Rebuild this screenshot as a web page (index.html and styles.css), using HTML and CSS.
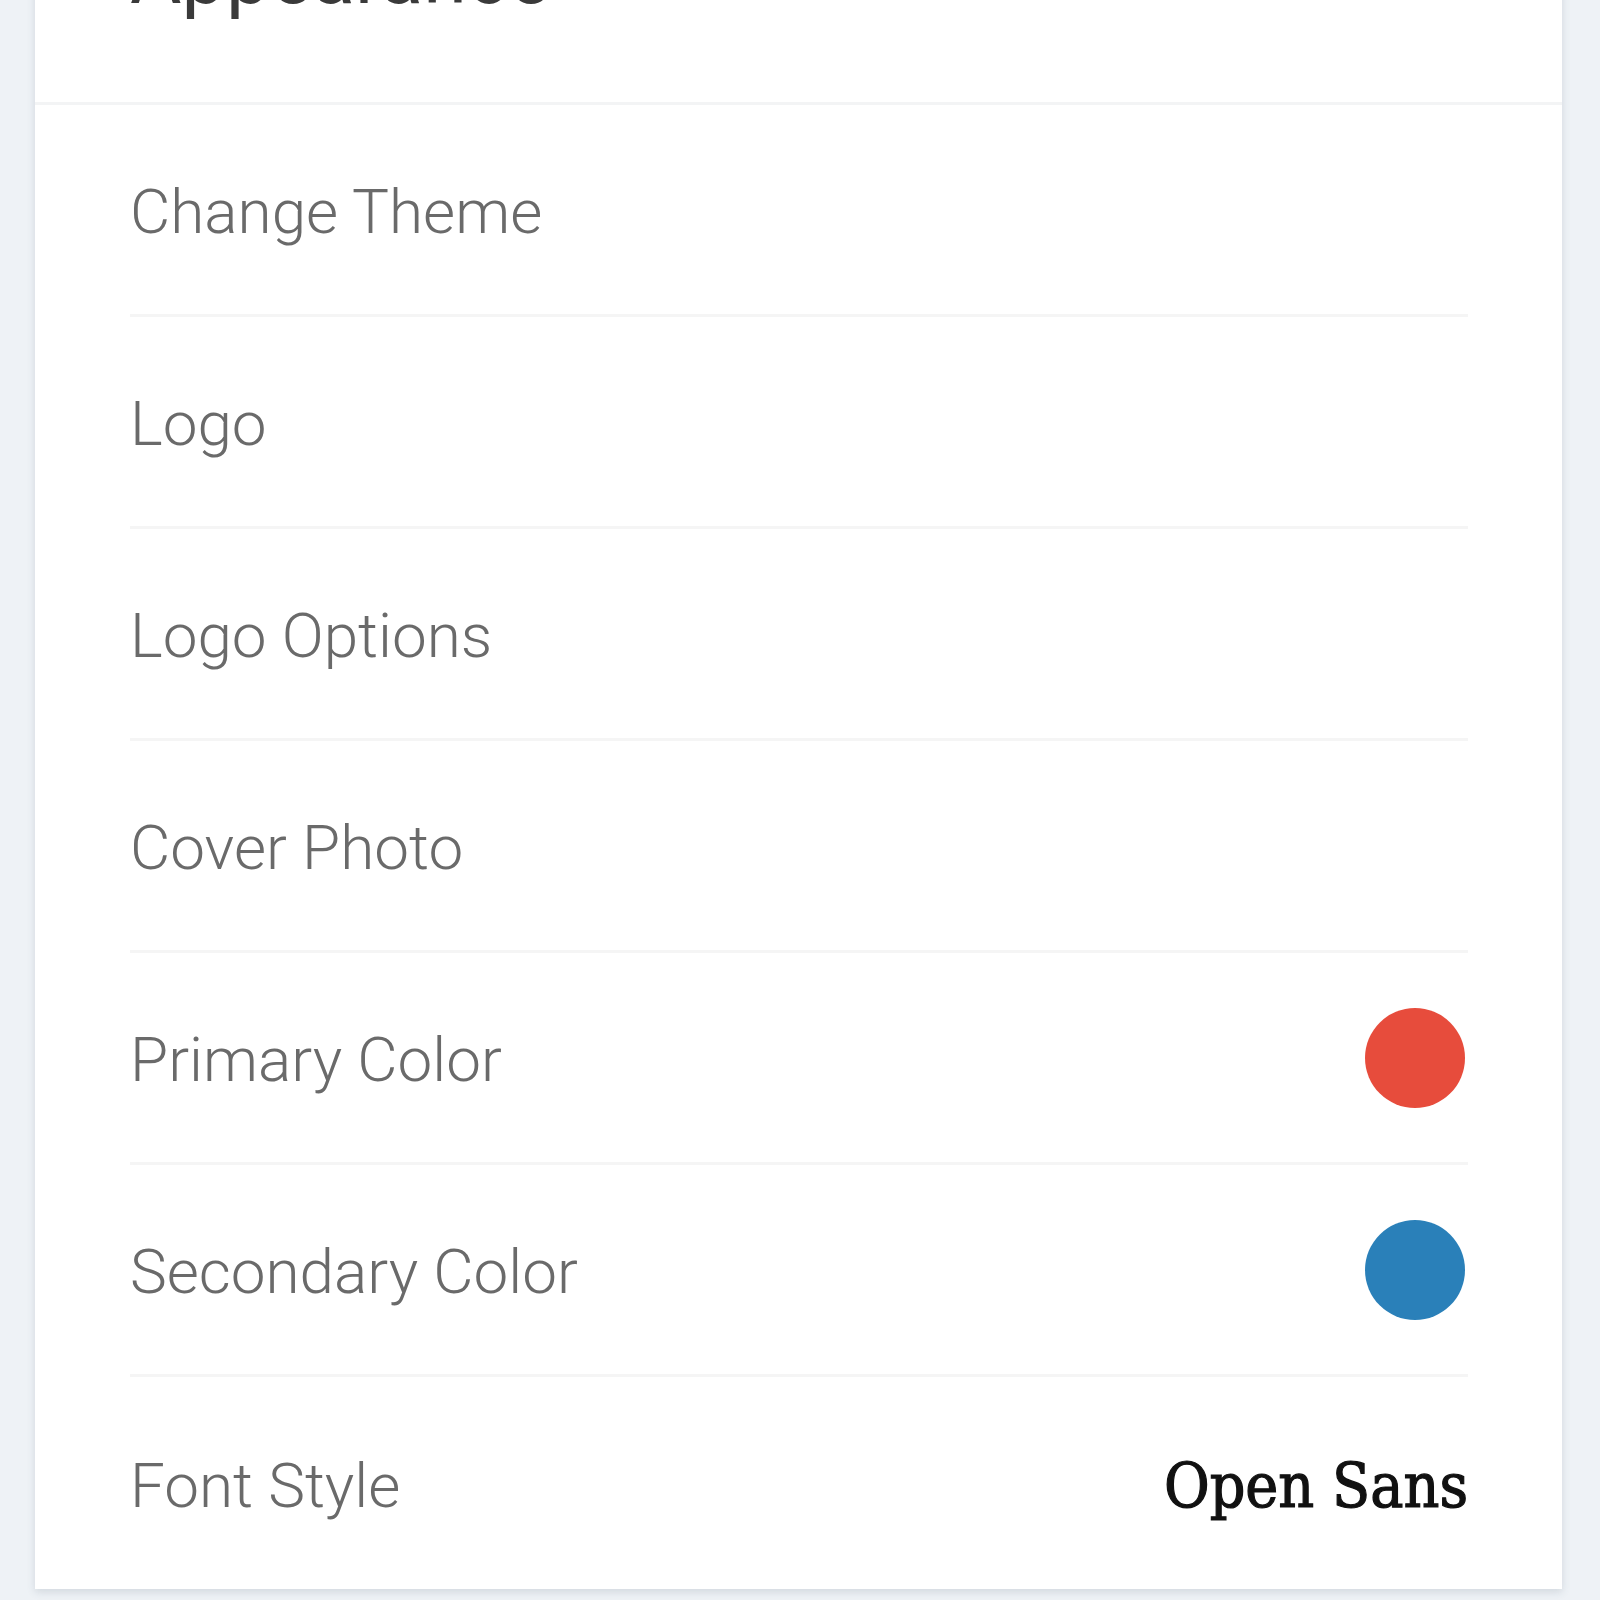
FILE: index.html
```html
<!DOCTYPE html>
<html lang="en">
<head>
    <meta charset="UTF-8">
    <meta name="viewport" content="width=device-width, initial-scale=1.0">
    <title>Appearance</title>
    <link rel="stylesheet" href="styles.css">
</head>
<body>

    <section class="card">
        <div class="card-head">
            <h2 class="card-title">Appearance</h2>
        </div>
        <ul class="settings">
            <li class="row"><span class="label">Change Theme</span></li>
            <li class="row"><span class="label">Logo</span></li>
            <li class="row"><span class="label">Logo Options</span></li>
            <li class="row"><span class="label">Cover Photo</span></li>
            <li class="row">
                <span class="label">Primary Color</span>
                <span class="swatch swatch-primary"></span>
            </li>
            <li class="row">
                <span class="label">Secondary Color</span>
                <span class="swatch swatch-secondary"></span>
            </li>
            <li class="row">
                <span class="label">Font Style</span>
                <span class="font-name">Open Sans</span>
            </li>
        </ul>
    </section>

</body>
</html>
```

FILE: styles.css
```css
* {
    padding: 0;
    margin: 0;
    box-sizing: border-box;
}

body {
    background-color: #eef2f6;
    font-family: Roboto, "Liberation Sans", sans-serif;
    padding-bottom: 12px;
}

.card {
    background-color: #ffffff;
    margin: -162px 38px 0 35px;
    box-shadow: 0 3px 8px rgba(60, 80, 100, 0.16);
}

.card-head {
    padding: 100px 95px 88px 95px;
    border-bottom: 3px solid #f3f4f5;
}

.card-title {
    font-size: 79px;
    line-height: 76px;
    font-weight: 400;
    color: #3a3a3a;
}

.settings {
    list-style: none;
    padding: 0 94px 0 95px;
}

.row {
    height: 212px;
    display: flex;
    justify-content: space-between;
    align-items: center;
    border-bottom: 3px solid #f5f5f5;
}

.row:last-child {
    border-bottom: none;
}

.label {
    font-size: 62px;
    font-weight: 300;
    color: #6a6a6a;
    padding-top: 4px;
}

.swatch {
    width: 100px;
    height: 100px;
    border-radius: 50%;
    margin-right: 3px;
}

.swatch-primary {
    background-color: #e74c3c;
}

.swatch-secondary {
    background-color: #2a80b9;
}

.font-name {
    font-family: "DejaVu Serif Condensed", "DejaVu Serif", serif;
    font-size: 62px;
    color: #111111;
    -webkit-text-stroke: 1.2px #111111;
    padding-top: 4px;
}
```
